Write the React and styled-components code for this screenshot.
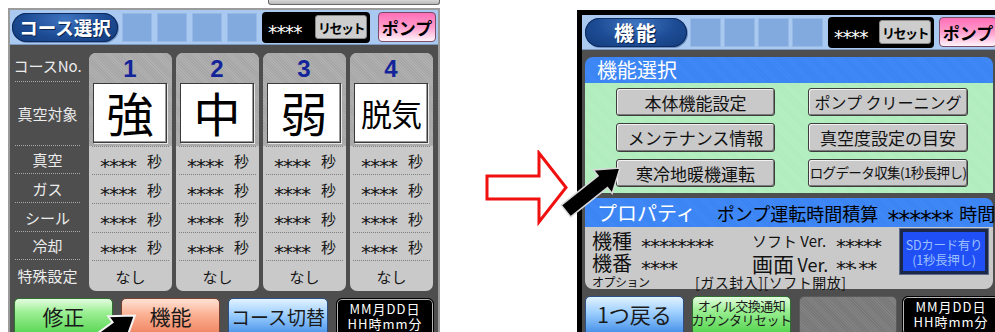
import React from "react";
import styled, { createGlobalStyle, css } from "styled-components";

const Global = createGlobalStyle`
  html, body { margin: 0; padding: 0; background: #fff; overflow: hidden; }
  body { font-family: "Noto Sans CJK JP", "Noto Sans", sans-serif; }
  * { box-sizing: border-box; }
`;

const JP = `"Noto Sans CJK JP", "Noto Sans", sans-serif`;

const Page = styled.div`
  position: relative;
  width: 995px;
  height: 332px;
  overflow: hidden;
  display: flex;
  align-items: flex-start;
`;

const LeftColumn = styled.div`
  display: flex;
  flex-direction: column;
  margin-left: 8px;
  width: 432px;
  flex-shrink: 0;
`;

const Remnant = styled.div`
  align-self: flex-end;
  width: 172px;
  height: 5px;
  margin-bottom: 3px;
  background: linear-gradient(#d8d8d8, #b8b8b8);
  border: 1px solid #6a6a6a;
  border-top: none;
  border-radius: 0 0 3px 3px;
`;

const Screen = styled.div`
  width: ${(p) => p.$w}px;
  height: ${(p) => p.$h}px;
  flex-shrink: 0;
  margin-top: ${(p) => p.$top || 0}px;
  border: ${(p) => p.$frame};
  border-bottom: none;
  background: #4e4e4e;
  display: flex;
  flex-direction: column;
`;

/* ---------- shared glyphs ---------- */
const Stars = styled.span`
  display: inline-block;
  font-family: "DejaVu Sans Mono", monospace;
  font-size: 1.33em;
  line-height: 1;
  letter-spacing: -0.15em;
  transform: translateY(0.32em);
`;

/* ---------- header ---------- */
const Header = styled.div`
  height: 35px;
  flex-shrink: 0;
  background: #a9c9f1;
  display: flex;
  align-items: center;
  padding-left: ${(p) => p.$pad}px;
  border-bottom: 1px solid #7d98bd;
`;

const Pill = styled.div`
  width: ${(p) => p.$w}px;
  height: 29px;
  flex-shrink: 0;
  border-radius: 15px;
  background: radial-gradient(ellipse at 50% 20%, #3f74c0 0%, #1d4c95 55%, #123a7a 100%);
  box-shadow: inset 0 0 0 1px #0d2b5e, 1px 1px 0 #6d8fc0;
  color: #fff;
  font-family: ${JP};
  font-weight: 700;
  font-size: ${(p) => p.$fs}px;
  letter-spacing: ${(p) => p.$ls || 0}px;
  display: flex;
  align-items: center;
  justify-content: center;
  text-shadow: 1px 1px 0 #0a234d;
  white-space: nowrap;
`;

const Squares = styled.div`
  display: flex;
  gap: ${(p) => p.$gap}px;
  margin-left: ${(p) => p.$ml}px;
`;

const Square = styled.div`
  width: ${(p) => p.$w}px;
  height: 29px;
  background: #82aade;
  border: 1px solid #96b9e6;
`;

const Counter = styled.div`
  width: ${(p) => p.$w}px;
  height: 31px;
  flex-shrink: 0;
  margin-left: 5px;
  background: #000;
  border-radius: 4px;
  display: flex;
  align-items: center;
  justify-content: space-between;
  padding: 0 3px 0 5px;
  color: #fff;
  font-family: ${JP};
  font-size: 14px;
  white-space: nowrap;
`;

const ResetBtn = styled.div`
  width: 52px;
  height: 24px;
  flex-shrink: 0;
  background: #cdcdcd;
  border-radius: 3px;
  border: 1px solid #8a8a8a;
  color: #000;
  font-family: ${JP};
  font-weight: 700;
  font-size: 13px;
  display: flex;
  align-items: center;
  justify-content: center;
  letter-spacing: -1.5px;
  white-space: nowrap;
`;

const PumpBtn = styled.div`
  width: ${(p) => p.$w}px;
  height: 30px;
  margin-left: ${(p) => p.$ml}px;
  flex-shrink: 0;
  border-radius: 4px;
  border: 1px solid #7a4a66;
  background: linear-gradient(#ff6fb6 0%, #ff9ccc 50%, #fff4fa 100%);
  color: #000;
  font-family: ${JP};
  font-weight: 700;
  font-size: 17px;
  display: flex;
  align-items: center;
  justify-content: center;
  white-space: nowrap;
`;

function ScreenHeader({ title, pad, pillW, pillFs, ls, sqW, sqGap, sqMl, counterW, pumpW, pumpMl }) {
  return (
    <Header $pad={pad}>
      <Pill $w={pillW} $fs={pillFs} $ls={ls}>{title}</Pill>
      <Squares $gap={sqGap} $ml={sqMl}>
        {[0, 1, 2, 3].map((i) => (
          <Square key={i} $w={sqW} />
        ))}
      </Squares>
      <Counter $w={counterW}>
        <Stars>****</Stars>
        <ResetBtn>リセット</ResetBtn>
      </Counter>
      <PumpBtn $w={pumpW} $ml={pumpMl}>ポンプ</PumpBtn>
    </Header>
  );
}

/* ---------- left: course table ---------- */
const Table = styled.div`
  display: flex;
  padding-top: 8px;
  gap: 4px;
`;

const LabelCol = styled.div`
  width: 75px;
  display: flex;
  flex-direction: column;
`;

const Label = styled.div`
  height: ${(p) => p.$h}px;
  margin: 0 5px;
  border-bottom: ${(p) => (p.$last ? "none" : "1px dotted #a8a8a8")};
  display: flex;
  align-items: center;
  justify-content: center;
  color: #ececec;
  font-family: ${JP};
  font-size: 15px;
  line-height: 1;
  white-space: nowrap;
  padding-bottom: ${(p) => p.$pb || 0}px;
`;

const CourseCol = styled.div`
  width: 83px;
  border-radius: 7px;
  overflow: hidden;
  background: #c9c9c9;
  display: flex;
  flex-direction: column;
`;

const ColTop = styled.div`
  height: 93px;
  padding: 0 5px 3px 4px;
  background: repeating-linear-gradient(45deg, #a6a6a6 0 1px, #b0b0b0 1px 2px);
  display: flex;
  flex-direction: column;
`;

const Num = styled.div`
  height: 30px;
  display: flex;
  align-items: center;
  justify-content: center;
  color: #13249a;
  font-family: "Liberation Sans", Arial, sans-serif;
  font-weight: 700;
  font-size: 24px;
  line-height: 1;
  padding-top: 2px;
`;

const BigBox = styled.div`
  height: 60px;
  background: #fff;
  border: 1px solid #3a3a3a;
  box-shadow: inset -1px -1px 0 #9a9a9a, 1px 1px 0 #e8e8e8;
  display: flex;
  align-items: center;
  justify-content: center;
  color: #000;
  font-family: ${JP};
  font-size: ${(p) => p.$fs}px;
  line-height: 1;
  letter-spacing: ${(p) => (p.$fs < 40 ? -1 : 0)}px;
  padding-bottom: ${(p) => (p.$fs < 40 ? 2 : 3)}px;
  white-space: nowrap;
`;

const Cell = styled.div`
  height: ${(p) => p.$h}px;
  margin: 0 3px;
  border-top: 1px dotted #808080;
  display: flex;
  align-items: center;
  justify-content: center;
  gap: 12px;
  color: #151515;
  font-family: ${JP};
  font-size: 15px;
  line-height: 1;
  white-space: nowrap;
`;

const BottomBar = styled.div`
  display: flex;
  gap: ${(p) => p.$gap}px;
  padding-left: ${(p) => p.$pad}px;
  margin-top: 7px;
`;

const btnColors = {
  green: css`
    background: linear-gradient(#e4fde0 0%, #9cef94 35%, #4fd24a 100%);
    border-color: #2f6f2f;
  `,
  orange: css`
    background: linear-gradient(#ffe2d6 0%, #fbb294 40%, #ee7d5a 100%);
    border-color: #7a4030;
  `,
  blue: css`
    background: linear-gradient(#e2f2ff 0%, #9fd0ff 40%, #3d8ae6 100%);
    border-color: #2c4f86;
  `,
  gray: css`
    background: repeating-linear-gradient(45deg, #787878 0 1px, #828282 1px 2px);
    border-color: #5a5a5a;
  `,
};

const Button = styled.div`
  width: ${(p) => p.$w}px;
  height: 40px;
  flex-shrink: 0;
  border: 1px solid;
  border-radius: 5px;
  ${(p) => btnColors[p.$color]}
  color: #1a1a1a;
  font-family: ${JP};
  font-size: ${(p) => p.$fs}px;
  line-height: ${(p) => (p.$small ? "14px" : 1)};
  display: flex;
  flex-direction: column;
  align-items: center;
  justify-content: ${(p) => (p.$small ? "flex-start" : "center")};
  padding-top: ${(p) => (p.$small ? 2 : 0)}px;
  padding-bottom: ${(p) => (p.$small ? 0 : 4)}px;
  text-align: center;
  white-space: nowrap;
  letter-spacing: ${(p) => p.$ls || 0}px;
`;

const Clock = styled.div`
  width: ${(p) => p.$w}px;
  height: 40px;
  flex-shrink: 0;
  margin-left: ${(p) => p.$ml || 0}px;
  background: #000;
  border: 1px solid #000;
  border-radius: 6px;
  box-shadow: inset 0 0 0 1px #b9b9b9, inset 0 0 0 2px #000;
  color: #fff;
  font-family: ${JP};
  font-size: 13px;
  line-height: 15px;
  letter-spacing: 1px;
  display: flex;
  flex-direction: column;
  align-items: center;
  padding-top: 2px;
  white-space: nowrap;
`;

const rows = [
  { label: "真空", h: 28 },
  { label: "ガス", h: 29 },
  { label: "シール", h: 29 },
  { label: "冷却", h: 28 },
];

const courses = [
  { n: "1", big: "強", fs: 47 },
  { n: "2", big: "中", fs: 47 },
  { n: "3", big: "弱", fs: 47 },
  { n: "4", big: "脱気", fs: 31 },
];

function CourseScreen() {
  return (
    <Screen $w={432} $h={324} $frame="2px solid #9b9b9b">
      <ScreenHeader
        title="コース選択"
        pad={2}
        pillW={106}
        pillFs={18.5}
        sqW={30}
        sqGap={5}
        sqMl={4}
        counterW={108}
        pumpW={58}
        pumpMl={8}
      />
      <Table>
        <LabelCol>
          <Label $h={29} $pb={4}>コースNo.</Label>
          <Label $h={64}>真空対象</Label>
          {rows.map((r) => (
            <Label key={r.label} $h={r.h}>{r.label}</Label>
          ))}
          <Label $h={31} $last>特殊設定</Label>
        </LabelCol>
        {courses.map((c) => (
          <CourseCol key={c.n}>
            <ColTop>
              <Num>{c.n}</Num>
              <BigBox $fs={c.fs}>{c.big}</BigBox>
            </ColTop>
            {rows.map((r) => (
              <Cell key={r.label} $h={r.h}>
                <Stars>****</Stars>
                <span>秒</span>
              </Cell>
            ))}
            <Cell $h={31}>なし</Cell>
          </CourseCol>
        ))}
      </Table>
      <BottomBar $gap={8} $pad={4}>
        <Button $w={99} $color="green" $fs={21}>修正</Button>
        <Button $w={99} $color="orange" $fs={21}>機能</Button>
        <Button $w={100} $color="blue" $fs={19}>コース切替</Button>
        <Clock $w={98}>
          <span>MM月DD日</span>
          <span>HH時mm分</span>
        </Clock>
      </BottomBar>
    </Screen>
  );
}

/* ---------- middle: red arrow ---------- */
const Gap = styled.div`
  width: 137px;
  flex-shrink: 0;
  padding: 150px 0 0 45px;
`;

/* ---------- right: function screen ---------- */
const RBody = styled.div`
  padding: 7px 3px 0 3px;
  display: flex;
  flex-direction: column;
`;

const PanelHead = styled.div`
  height: ${(p) => p.$h}px;
  border-radius: 8px 8px 0 0;
  background: repeating-linear-gradient(45deg, #3a83f3 0 1px, #4089f6 1px 2px);
  display: flex;
  align-items: center;
  padding-left: 12px;
  color: #fff;
  font-family: ${JP};
  font-size: 20px;
  line-height: 1;
  white-space: nowrap;
`;

const HeadExtra = styled.span`
  color: #000;
  font-size: 18px;
  margin-left: 21px;
  display: flex;
  align-items: center;
  gap: 8px;
`;

const GreenArea = styled.div`
  background: repeating-linear-gradient(45deg, #aeecbc 0 1px, #b6f0c2 1px 2px);
  padding: 5px 0 6px 31px;
  display: grid;
  grid-template-columns: 159px 160px;
  column-gap: 33px;
  row-gap: 7px;
`;

const FnBtn = styled.div`
  height: ${(p) => p.$h}px;
  background: #c9c9c9;
  border: 1px solid #3c3c3c;
  border-radius: 3px;
  box-shadow: inset 1px 1px 0 #f2f2f2, inset -1px -1px 0 #7a7a7a;
  display: flex;
  align-items: center;
  justify-content: center;
  color: #111;
  font-family: ${JP};
  font-size: ${(p) => p.$fs || 17}px;
  line-height: 1;
  letter-spacing: ${(p) => p.$ls || 0}px;
  white-space: nowrap;
`;

const PropPanel = styled.div`
  margin-top: 5px;
  display: flex;
  flex-direction: column;
`;

const PropBody = styled.div`
  height: 62px;
  background: #c9c9c9;
  border-radius: 0 0 8px 8px;
  display: flex;
  padding: 2px 5px 0 7px;
`;

const InfoBlock = styled.div`
  display: flex;
  flex-direction: column;
`;

const InfoGrid = styled.div`
  display: grid;
  grid-template-columns: 48px 112px 83px auto;
  grid-template-rows: 23px 22px;
  align-items: center;
  color: #111;
  font-family: ${JP};
  font-size: 15px;
  line-height: 1;
  white-space: nowrap;
`;

const Big = styled.span`
  font-size: ${(p) => p.$fs || 20}px;
  line-height: 1;
`;

const OptionRow = styled.div`
  height: 14px;
  display: flex;
  align-items: center;
  color: #111;
  font-family: ${JP};
  white-space: nowrap;
  margin-top: 1px;
`;

const OptLabel = styled.span`
  width: 103px;
  font-size: 12px;
  line-height: 1;
  letter-spacing: -0.5px;
`;

const OptValue = styled.span`
  font-size: 14px;
  line-height: 1;
  letter-spacing: 0.5px;
`;

const SdBox = styled.div`
  margin-left: auto;
  width: 88px;
  height: 45px;
  flex-shrink: 0;
  background: #1f4ff5;
  border: 3px solid #1b2848;
  box-shadow: 0 0 0 1px #5d6c8c;
  color: #9cc0ff;
  font-family: ${JP};
  font-size: 12.5px;
  line-height: 15px;
  display: flex;
  flex-direction: column;
  align-items: center;
  justify-content: center;
  white-space: nowrap;
  letter-spacing: -0.3px;
`;

function FunctionScreen() {
  return (
    <Screen $w={424} $h={322} $top={10} $frame="5px solid #000">
      <ScreenHeader
        title="機能"
        pad={3}
        pillW={102}
        pillFs={20}
        ls={2}
        sqW={31}
        sqGap={3}
        sqMl={3}
        counterW={106}
        pumpW={58}
        pumpMl={5}
      />
      <RBody>
        <PanelHead $h={26}>機能選択</PanelHead>
        <GreenArea>
          <FnBtn $h={28}>本体機能設定</FnBtn>
          <FnBtn $h={28} $fs={16}>ポンプ クリーニング</FnBtn>
          <FnBtn $h={29}>メンテナンス情報</FnBtn>
          <FnBtn $h={29}>真空度設定の目安</FnBtn>
          <FnBtn $h={28}>寒冷地暖機運転</FnBtn>
          <FnBtn $h={28} $fs={13.5} $ls={-0.6}>ログデータ収集(1秒長押し)</FnBtn>
        </GreenArea>
        <PropPanel>
          <PanelHead $h={29}>
            プロパティ
            <HeadExtra>
              <span>ポンプ運転時間積算</span>
              <Stars>******</Stars>
              <span>時間</span>
            </HeadExtra>
          </PanelHead>
          <PropBody>
            <InfoBlock>
              <InfoGrid>
                <Big>機種</Big>
                <span><Stars>********</Stars></span>
                <span>ソフト Ver.</span>
                <span><Stars>*****</Stars></span>
                <Big>機番</Big>
                <span><Stars>****</Stars></span>
                <span>
                  <Big $fs={21}>画面</Big> <Big $fs={18}>Ver.</Big>
                </span>
                <span>
                  <Stars>**</Stars>.<Stars>**</Stars>
                </span>
              </InfoGrid>
              <OptionRow>
                <OptLabel>オプション</OptLabel>
                <OptValue>[ガス封入][ソフト開放]</OptValue>
              </OptionRow>
            </InfoBlock>
            <SdBox>
              <span>SDカード有り</span>
              <span>(1秒長押し)</span>
            </SdBox>
          </PropBody>
        </PropPanel>
        <BottomBar $gap={8} $pad={0}>
          <Button $w={99} $color="blue" $fs={21}>1つ戻る</Button>
          <Button $w={99} $color="green" $fs={13} $small $ls={-0.5}>
            <span>オイル交換通知</span>
            <span>カウンタリセット</span>
          </Button>
          <Button $w={98} $color="gray" $fs={14} />
          <Clock $w={98} $ml={-3}>
            <span>MM月DD日</span>
            <span>HH時mm分</span>
          </Clock>
        </BottomBar>
      </RBody>
    </Screen>
  );
}

/* ---------- overlay arrows ---------- */
const Overlay = styled.svg`
  position: absolute;
  left: 0;
  top: 0;
  pointer-events: none;
`;

const arrowPts = "0,-7.5 47,-7.5 47,-15 69,0 47,15 47,7.5 0,7.5";

export default function App() {
  return (
    <>
      <Global />
      <Page>
        <LeftColumn>
          <Remnant />
          <CourseScreen />
        </LeftColumn>
        <Gap>
          <svg width="84" height="76" viewBox="0 0 84 76">
            <polygon
              points="2,26 54,26 54,3 81,37.5 54,72 54,49 2,49"
              fill="#fff"
              stroke="#f01010"
              strokeWidth="3"
              strokeLinejoin="miter"
            />
          </svg>
        </Gap>
        <FunctionScreen />
        <Overlay width="995" height="332" viewBox="0 0 995 332">
          <polygon
            points={arrowPts}
            transform="translate(566 211) rotate(-38.5)"
            fill="#000"
            stroke="#d8d8d8"
            strokeWidth="1.5"
          />
          <polygon
            points={arrowPts}
            transform="translate(79 356) rotate(-36)"
            fill="#000"
            stroke="#f4f4f4"
            strokeWidth="2"
          />
        </Overlay>
      </Page>
    </>
  );
}
